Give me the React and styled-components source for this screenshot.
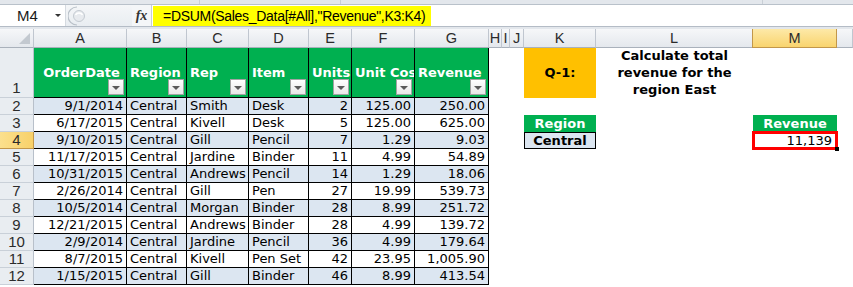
import React from "react";
import styled, { createGlobalStyle } from "styled-components";

const Global = createGlobalStyle`
  html, body { margin: 0; padding: 0; background: #fff; overflow: hidden; }
  * { box-sizing: border-box; }
`;

const COLS = [34, 93, 60, 62, 60, 43, 63, 74, 13, 8, 14, 72, 157, 84];
const LETTERS = ["A", "B", "C", "D", "E", "F", "G", "H", "I", "J", "K", "L", "M"];

const Page = styled.div`
  width: 853px;
  height: 287px;
  display: flex;
  flex-direction: column;
  font-family: "DejaVu Sans", Verdana, sans-serif;
`;

const RibbonEdge = styled.div`
  height: 5px;
  background: #e3e7ec;
  border-bottom: 1px solid #b9c1ca;
  display: flex;
`;

const RibbonTick = styled.div`
  width: ${(p) => p.$w}px;
  border-right: 1px solid #c9cfd6;
`;

const FormulaBar = styled.div`
  height: 22px;
  display: flex;
  align-items: stretch;
  background: #fff;
  border-bottom: 1px solid #b4bcc6;
`;

const NameBox = styled.div`
  width: 66px;
  display: flex;
  align-items: center;
  justify-content: space-between;
  padding: 0 4px 0 17px;
  font-family: "Liberation Sans", Arial, sans-serif;
  font-size: 15px;
  color: #1a1a1a;
  border-right: 1px solid #d5dae0;
`;

const Caret = styled.span`
  width: 0;
  height: 0;
  border-left: 3px solid transparent;
  border-right: 3px solid transparent;
  border-top: 3px solid #333;
`;

const Splitter = styled.div`
  width: 66px;
  display: flex;
  align-items: center;
  background: linear-gradient(#f4f6f8, #e9edf1);
`;

const Fx = styled.div`
  width: 19px;
  display: flex;
  align-items: center;
  justify-content: center;
  font-family: "Liberation Serif", "Times New Roman", serif;
  font-style: italic;
  font-weight: bold;
  font-size: 14px;
  color: #333;
  background: #f4f6f8;
`;

const FormulaArea = styled.div`
  flex: 1;
  display: flex;
  align-items: stretch;
  padding: 1px 0 0 1px;
  border-left: 1px solid #c9cfd6;
`;

const Formula = styled.div`
  background: #ffff00;
  padding: 0 0 0 10px;
  width: 278px;
  display: flex;
  align-items: center;
  font-family: "Liberation Sans", Arial, sans-serif;
  font-size: 14px;
  letter-spacing: -0.3px;
  color: #000;
  white-space: nowrap;
`;

const BarGap = styled.div`
  height: 2px;
  background: #e3e7ec;
`;

const Sheet = styled.div`
  flex: 1;
  display: grid;
  grid-template-columns: ${COLS.map((c) => c + "px").join(" ")} 1fr;
  grid-template-rows: 19px 50px repeat(11, 17px) 1fr;
  background: #fff;
`;

const Corner = styled.div`
  position: relative;
  background: linear-gradient(#f6f7f9, #e4e8ed);
  border-right: 1px solid #c0c6cf;
  border-bottom: 1px solid #a9b1bb;
  &::after {
    content: "";
    position: absolute;
    right: 3px;
    bottom: 3px;
    border-left: 11px solid transparent;
    border-bottom: 11px solid #c3c9d0;
  }
`;

const ColHead = styled.div`
  display: flex;
  align-items: center;
  justify-content: center;
  font-family: "Liberation Sans", Arial, sans-serif;
  font-size: 14.5px;
  color: #2b2b2b;
  background: ${(p) =>
    p.$active
      ? "linear-gradient(#fde9a8, #f9d46e)"
      : "linear-gradient(#f6f7f9, #e4e8ed)"};
  border-right: 1px solid ${(p) => (p.$active ? "#c2974a" : "#c0c6cf")};
  border-bottom: 1px solid ${(p) => (p.$active ? "#c2974a" : "#a9b1bb")};
  border-left: ${(p) => (p.$active ? "1px solid #c2974a" : "none")};
  margin-left: ${(p) => (p.$active ? "-1px" : "0")};
`;

const RowHead = styled.div`
  display: flex;
  align-items: ${(p) => (p.$tall ? "flex-end" : "center")};
  justify-content: center;
  padding-bottom: ${(p) => (p.$tall ? "1px" : "0")};
  font-family: "Liberation Sans", Arial, sans-serif;
  font-size: 15px;
  line-height: 16px;
  color: #2b2b2b;
  background: ${(p) =>
    p.$active ? "linear-gradient(90deg, #fbe08d, #f8d16a)" : "#e9edf1"};
  border-right: 1px solid ${(p) => (p.$active ? "#c2974a" : "#b8c0ca")};
  border-bottom: 1px solid ${(p) => (p.$active ? "#c2974a" : "#c9d0d8")};
`;

const HeadCell = styled.div`
  position: relative;
  background: #00b050;
  color: #fff;
  font-weight: bold;
  font-size: 13px;
  display: flex;
  align-items: center;
  justify-content: ${(p) => (p.$center ? "center" : "flex-start")};
  padding: 0 0 0 3px;
  white-space: nowrap;
  overflow: hidden;
  border-right: 1px solid #000;
  border-bottom: 1px solid #000;
`;

const FilterButton = styled.span`
  position: absolute;
  right: 2px;
  bottom: 2px;
  width: 16px;
  height: 16px;
  display: flex;
  align-items: center;
  justify-content: center;
  background: linear-gradient(#ffffff, #e8e8e8);
  border: 1px solid #a3a3a3;
  &::before {
    content: "";
    border-left: 4px solid transparent;
    border-right: 4px solid transparent;
    border-top: 4px solid #5a5a5a;
    margin-top: 1px;
  }
`;

const DataCell = styled.div`
  background: ${(p) => (p.$band ? "#dce6f1" : "#fff")};
  font-size: 13px;
  line-height: 16px;
  color: #000;
  text-align: ${(p) => (p.$right ? "right" : "left")};
  padding: 0 3px 0 3px;
  white-space: nowrap;
  overflow: hidden;
  border-right: 1px solid #000;
  border-bottom: 1px solid #000;
`;

const Blank = styled.div``;

const QBox = styled.div`
  background: #ffc000;
  display: flex;
  align-items: center;
  justify-content: center;
  font-weight: bold;
  font-size: 13px;
  color: #000;
  padding-bottom: 1px;
`;

const Prompt = styled.div`
  display: flex;
  align-items: center;
  justify-content: center;
  text-align: center;
  font-weight: bold;
  font-size: 13px;
  line-height: 17px;
  color: #000;
  padding-bottom: 1px;
`;

const GreenLabel = styled.div`
  background: #00b050;
  color: #fff;
  font-weight: bold;
  font-size: 13px;
  line-height: 17px;
  text-align: center;
`;

const Criteria = styled.div`
  background: #dce6f1;
  border: 1px solid #000;
  font-weight: bold;
  font-size: 13px;
  line-height: 15px;
  text-align: center;
  color: #000;
`;

const Result = styled.div`
  position: relative;
  font-size: 13px;
  line-height: 17px;
  text-align: right;
  padding-right: 5px;
  color: #000;
  &::before {
    content: "";
    position: absolute;
    left: -1px;
    top: -1px;
    right: -1px;
    bottom: -1px;
    border: 3px solid #ff0000;
  }
  &::after {
    content: "";
    position: absolute;
    right: -2px;
    bottom: -2px;
    width: 4px;
    height: 4px;
    background: #000;
  }
`;

const DATA = [
  ["9/1/2014", "Central", "Smith", "Desk", "2", "125.00", "250.00"],
  ["6/17/2015", "Central", "Kivell", "Desk", "5", "125.00", "625.00"],
  ["9/10/2015", "Central", "Gill", "Pencil", "7", "1.29", "9.03"],
  ["11/17/2015", "Central", "Jardine", "Binder", "11", "4.99", "54.89"],
  ["10/31/2015", "Central", "Andrews", "Pencil", "14", "1.29", "18.06"],
  ["2/26/2014", "Central", "Gill", "Pen", "27", "19.99", "539.73"],
  ["10/5/2014", "Central", "Morgan", "Binder", "28", "8.99", "251.72"],
  ["12/21/2015", "Central", "Andrews", "Binder", "28", "4.99", "139.72"],
  ["2/9/2014", "Central", "Jardine", "Pencil", "36", "4.99", "179.64"],
  ["8/7/2015", "Central", "Kivell", "Pen Set", "42", "23.95", "1,005.90"],
  ["1/15/2015", "Central", "Gill", "Binder", "46", "8.99", "413.54"],
];

const HEADERS = ["OrderDate", "Region", "Rep", "Item", "Units", "Unit Cost", "Revenue"];
const RIGHT = [true, false, false, false, true, true, true];

function SplitterIcon() {
  return (
    <svg width="18" height="20" viewBox="0 0 18 20" style={{ marginLeft: 2 }}>
      <path d="M9 1 A9 9 0 0 0 9 19" fill="none" stroke="#b9c0c8" strokeWidth="1.2" />
      <circle cx="11" cy="10" r="5.5" fill="#e7eaee" stroke="#c4cad1" />
      <path d="M7.5 9 A4 4 0 0 1 14.5 9" fill="none" stroke="#fff" strokeWidth="1.5" />
    </svg>
  );
}

function RightCells({ row }) {
  const k =
    row === 1 ? <QBox>Q-1:</QBox> :
    row === 3 ? <GreenLabel>Region</GreenLabel> :
    row === 4 ? <Criteria>Central</Criteria> : <Blank />;
  const l =
    row === 1 ? (
      <Prompt>
        Calculate total
        <br />
        revenue for the
        <br />
        region East
      </Prompt>
    ) : (
      <Blank />
    );
  const m =
    row === 3 ? <GreenLabel>Revenue</GreenLabel> :
    row === 4 ? <Result>11,139</Result> : <Blank />;
  return (
    <>
      <Blank />
      <Blank />
      <Blank />
      {k}
      {l}
      {m}
      <Blank />
    </>
  );
}

export default function App() {
  const ticks = [200, 141, 422];
  return (
    <Page>
      <Global />
      <RibbonEdge>
        {ticks.map((w, i) => (
          <RibbonTick key={i} $w={w} />
        ))}
      </RibbonEdge>
      <FormulaBar>
        <NameBox>
          M4
          <Caret />
        </NameBox>
        <Splitter>
          <SplitterIcon />
        </Splitter>
        <Fx>fx</Fx>
        <FormulaArea>
          <Formula>=DSUM(Sales_Data[#All],"Revenue",K3:K4)</Formula>
        </FormulaArea>
      </FormulaBar>
      <BarGap />
      <Sheet>
        <Corner />
        {LETTERS.map((l) => (
          <ColHead key={l} $active={l === "M"}>
            {l}
          </ColHead>
        ))}
        <ColHead />

        <RowHead $tall>1</RowHead>
        {HEADERS.map((h, i) => (
          <HeadCell key={h} $center={i === 0}>
            {h}
            <FilterButton />
          </HeadCell>
        ))}
        <RightCells row={1} />

        {DATA.map((r, i) => {
          const rowNo = i + 2;
          return (
            <React.Fragment key={rowNo}>
              <RowHead $active={rowNo === 4}>{rowNo}</RowHead>
              {r.map((v, j) => (
                <DataCell key={j} $band={rowNo % 2 === 0} $right={RIGHT[j]}>
                  {v}
                </DataCell>
              ))}
              <RightCells row={rowNo} />
            </React.Fragment>
          );
        })}
      </Sheet>
    </Page>
  );
}
